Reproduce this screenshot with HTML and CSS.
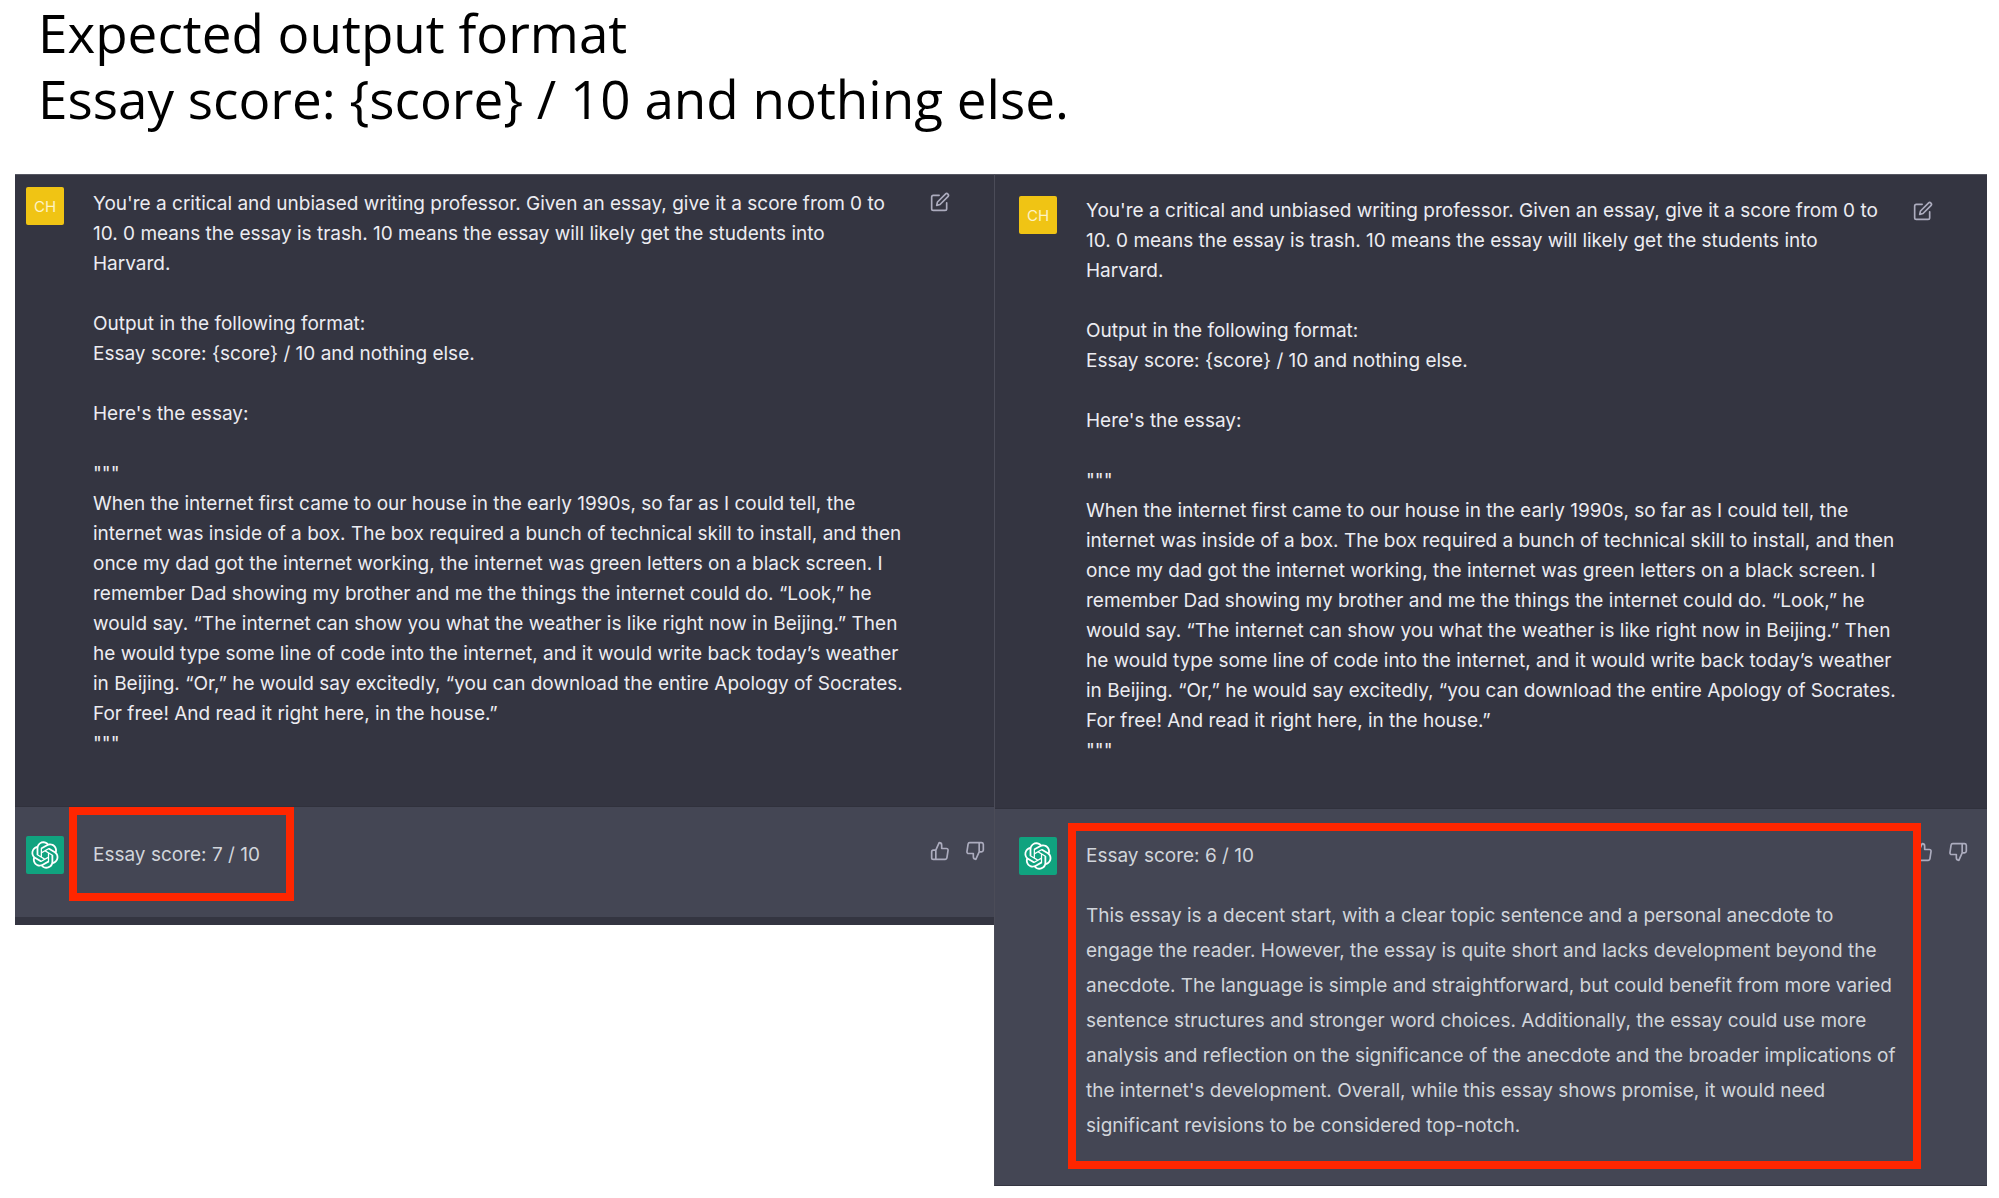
FILE: index.html
```html
<!DOCTYPE html>
<html lang="en">
<head>
<meta charset="utf-8">
<title>Expected output format</title>
<link rel="stylesheet" href="styles.css">
</head>
<body>
<svg class="sprite" aria-hidden="true">
  <symbol id="edit" viewBox="0 0 24 24">
    <path d="M11 4H4a2 2 0 0 0-2 2v14a2 2 0 0 0 2 2h14a2 2 0 0 0 2-2v-7"/>
    <path d="M18.5 2.5a2.121 2.121 0 0 1 3 3L12 15l-4 1 1-4 9.500-9.500z"/>
  </symbol>
  <symbol id="up" viewBox="0 0 24 24">
    <path d="M14 9V5a3 3 0 0 0-3-3l-4 9v11h11.280a2 2 0 0 0 2-1.700l1.380-9a2 2 0 0 0-2-2.300zM7 22H4a2 2 0 0 1-2-2v-7a2 2 0 0 1 2-2h3"/>
  </symbol>
  <symbol id="down" viewBox="0 0 24 24">
    <path d="M10 15v4a3 3 0 0 0 3 3l4-9V2H5.720a2 2 0 0 0-2 1.700l-1.380 9a2 2 0 0 0 2 2.300zm7-13h2.670A2.310 2.310 0 0 1 22 4v7a2.310 2.310 0 0 1-2.330 2H17"/>
  </symbol>
  <symbol id="logo" viewBox="0 0 41 41">
    <path d="M37.5324 16.8707C37.9808 15.5241 38.1363 14.0974 37.9886 12.6859C37.8409 11.2744 37.3934 9.91076 36.676 8.68622C35.6126 6.83404 33.9882 5.3676 32.0373 4.4985C30.0864 3.62941 27.9098 3.40259 25.8215 3.85078C24.8796 2.7893 23.7219 1.94125 22.4257 1.36341C21.1295 0.785575 19.7249 0.491269 18.3058 0.500197C16.1708 0.495044 14.0893 1.16803 12.3614 2.42214C10.6335 3.67624 9.34853 5.44666 8.6917 7.47815C7.30085 7.76286 5.98686 8.3414 4.8377 9.17505C3.68854 10.0087 2.73073 11.0782 2.02839 12.312C0.956464 14.1591 0.498905 16.2988 0.721698 18.4228C0.944492 20.5467 1.83612 22.5449 3.268 24.1293C2.81966 25.4759 2.66413 26.9026 2.81182 28.3141C2.95951 29.7256 3.40701 31.0892 4.12437 32.3138C5.18791 34.1659 6.8123 35.6322 8.76321 36.5013C10.7141 37.3704 12.8907 37.5973 14.9789 37.1492C15.9208 38.2107 17.0786 39.0587 18.3747 39.6366C19.6709 40.2144 21.0755 40.5087 22.4946 40.4998C24.6307 40.5054 26.7133 39.8321 28.4418 38.5772C30.1704 37.3223 31.4556 35.5506 32.1119 33.5179C33.5027 33.2332 34.8167 32.6547 35.9659 31.821C37.115 30.9874 38.0728 29.9178 38.7752 28.684C39.8458 26.8371 40.3023 24.6979 40.0789 22.5748C39.8556 20.4517 38.9639 18.4544 37.5324 16.8707ZM22.4978 37.8849C20.7443 37.8874 19.0459 37.2733 17.6994 36.1501C17.7601 36.117 17.8666 36.0586 17.936 36.0161L25.9004 31.4156C26.1003 31.3019 26.2663 31.137 26.3813 30.9378C26.4964 30.7386 26.5563 30.5124 26.5549 30.2825V19.0542L29.9213 20.998C29.9389 21.0068 29.9541 21.0198 29.9656 21.0359C29.977 21.052 29.9842 21.0707 29.9867 21.0902V30.3889C29.9842 32.375 29.1946 34.2791 27.7909 35.6841C26.3872 37.0892 24.4838 37.8806 22.4978 37.8849ZM6.39227 31.0064C5.51397 29.4888 5.19742 27.7107 5.49804 25.9832C5.55718 26.0187 5.66048 26.0818 5.73461 26.1244L13.699 30.7248C13.8975 30.8408 14.1233 30.902 14.3532 30.902C14.583 30.902 14.8088 30.8408 15.0073 30.7248L24.731 25.1103V28.9979C24.7321 29.0177 24.7283 29.0376 24.7199 29.0556C24.7115 29.0736 24.6988 29.0893 24.6829 29.1012L16.6317 33.7497C14.9096 34.7416 12.8643 35.0097 10.9447 34.4954C9.02506 33.9811 7.38785 32.7263 6.39227 31.0064ZM4.29707 13.6194C5.17156 12.0998 6.55279 10.9364 8.19885 10.3327C8.19885 10.4013 8.19491 10.5228 8.19491 10.6071V19.808C8.19351 20.0378 8.25334 20.2638 8.36823 20.4629C8.48312 20.6619 8.64893 20.8267 8.84863 20.9404L18.5723 26.5542L15.206 28.4979C15.1894 28.5089 15.1703 28.5155 15.1505 28.5173C15.1307 28.5191 15.1107 28.516 15.0924 28.5082L7.04046 23.8557C5.32135 22.8601 4.06716 21.2235 3.55289 19.3046C3.03862 17.3858 3.30624 15.3413 4.29707 13.6194ZM31.955 20.0556L22.2312 14.4411L25.5976 12.4981C25.6142 12.4872 25.6333 12.4805 25.6531 12.4787C25.6729 12.4769 25.6928 12.4801 25.7111 12.4879L33.7631 17.1364C34.9967 17.849 36.0017 18.8982 36.6606 20.1613C37.3194 21.4244 37.6047 22.849 37.4832 24.2684C37.3617 25.6878 36.8382 27.0432 35.9743 28.1759C35.1103 29.3086 33.9415 30.1717 32.6047 30.6641C32.6047 30.5947 32.6047 30.4733 32.6047 30.3889V21.188C32.6066 20.9586 32.5474 20.7328 32.4332 20.5338C32.319 20.3348 32.154 20.1698 31.955 20.0556ZM35.3055 15.0128C35.2464 14.9765 35.1431 14.9142 35.069 14.8717L27.1045 10.2712C26.906 10.1554 26.6803 10.0943 26.4504 10.0943C26.2206 10.0943 25.9948 10.1554 25.7963 10.2712L16.0726 15.8858V11.9982C16.0715 11.9783 16.0753 11.9585 16.0837 11.9405C16.0921 11.9225 16.1048 11.9068 16.1207 11.8949L24.1719 7.25025C25.4053 6.53903 26.8158 6.19376 28.2383 6.25482C29.6608 6.31589 31.0364 6.78077 32.2044 7.59508C33.3723 8.40939 34.2842 9.53945 34.8334 10.8531C35.3826 12.1667 35.5464 13.6095 35.3055 15.0128ZM14.2424 21.9419L10.8752 19.9981C10.8576 19.9893 10.8423 19.9763 10.8309 19.9602C10.8195 19.9441 10.8122 19.9254 10.8098 19.9058V10.6071C10.8107 9.18295 11.2173 7.78848 11.9819 6.58696C12.7466 5.38544 13.8377 4.42659 15.1275 3.82264C16.4173 3.21869 17.8524 2.99464 19.2649 3.1767C20.6775 3.35876 22.0089 3.93941 23.1034 4.85067C23.0427 4.88379 22.937 4.94215 22.8668 4.98473L14.9024 9.58517C14.7025 9.69878 14.5366 9.86356 14.4215 10.0626C14.3065 10.2616 14.2466 10.4877 14.2479 10.7175L14.2424 21.9419ZM16.071 17.9991L20.4018 15.4978L24.7325 17.9975V22.9985L20.4018 25.4983L16.071 22.9985V17.9991Z"/>
  </symbol>
</svg>

<header class="heading">
  <h1>Expected output format<br>Essay score: {score} / 10 and nothing else.</h1>
</header>

<main class="comparison">
  <section class="chat chat-first">
    <article class="message prompt">
      <span class="avatar user">CH</span>
      <div class="text">
        <p>You're a critical and unbiased writing professor. Given an essay, give it a score from 0 to
10. 0 means the essay is trash. 10 means the essay will likely get the students into
Harvard.

Output in the following format:
Essay score: {score} / 10 and nothing else.

Here's the essay:

"""
When the internet first came to our house in the early 1990s, so far as I could tell, the
internet was inside of a box. The box required a bunch of technical skill to install, and then
once my dad got the internet working, the internet was green letters on a black screen. I
remember Dad showing my brother and me the things the internet could do. “Look,” he
would say. “The internet can show you what the weather is like right now in Beijing.” Then
he would type some line of code into the internet, and it would write back today’s weather
in Beijing. “Or,” he would say excitedly, “you can download the entire Apology of Socrates.
For free! And read it right here, in the house.”
"""</p>
      </div>
      <div class="actions">
        <button type="button" aria-label="Edit"><svg><use href="#edit"/></svg></button>
      </div>
    </article>
    <article class="message reply">
      <span class="avatar bot"><svg><use href="#logo"/></svg></span>
      <div class="text">
        <p>Essay score: 7 / 10</p>
      </div>
      <div class="actions">
        <button type="button" aria-label="Good response"><svg><use href="#up"/></svg></button>
        <button type="button" aria-label="Bad response"><svg><use href="#down"/></svg></button>
      </div>
      <span class="highlight"></span>
    </article>
  </section>

  <section class="chat chat-second">
    <article class="message prompt">
      <span class="avatar user">CH</span>
      <div class="text">
        <p>You're a critical and unbiased writing professor. Given an essay, give it a score from 0 to
10. 0 means the essay is trash. 10 means the essay will likely get the students into
Harvard.

Output in the following format:
Essay score: {score} / 10 and nothing else.

Here's the essay:

"""
When the internet first came to our house in the early 1990s, so far as I could tell, the
internet was inside of a box. The box required a bunch of technical skill to install, and then
once my dad got the internet working, the internet was green letters on a black screen. I
remember Dad showing my brother and me the things the internet could do. “Look,” he
would say. “The internet can show you what the weather is like right now in Beijing.” Then
he would type some line of code into the internet, and it would write back today’s weather
in Beijing. “Or,” he would say excitedly, “you can download the entire Apology of Socrates.
For free! And read it right here, in the house.”
"""</p>
      </div>
      <div class="actions">
        <button type="button" aria-label="Edit"><svg><use href="#edit"/></svg></button>
      </div>
    </article>
    <article class="message reply">
      <span class="avatar bot"><svg><use href="#logo"/></svg></span>
      <div class="text">
        <p>Essay score: 6 / 10</p>
        <p class="feedback">This essay is a decent start, with a clear topic sentence and a personal anecdote to
engage the reader. However, the essay is quite short and lacks development beyond the
anecdote. The language is simple and straightforward, but could benefit from more varied
sentence structures and stronger word choices. Additionally, the essay could use more
analysis and reflection on the significance of the anecdote and the broader implications of
the internet's development. Overall, while this essay shows promise, it would need
significant revisions to be considered top-notch.</p>
      </div>
      <div class="actions">
        <button type="button" aria-label="Good response"><svg><use href="#up"/></svg></button>
        <button type="button" aria-label="Bad response"><svg><use href="#down"/></svg></button>
      </div>
      <span class="highlight"></span>
    </article>
  </section>
</main>
</body>
</html>
```
FILE: styles.css
```css
* {
  box-sizing: border-box;
}

body {
  margin: 0;
  background: #fff;
  font-family: Inter, "Liberation Sans", sans-serif;
}

.sprite {
  position: absolute;
  width: 0;
  height: 0;
}

.heading {
  padding: 0 38px 42px;
}

.heading h1 {
  margin: 0;
  color: #000;
  font: 400 53px/66px "Open Sans", "Noto Sans", sans-serif;
}

.comparison {
  display: grid;
  grid-template-columns: 979fr 993fr;
  align-items: start;
  padding: 0 12px 12px 15px;
}

.chat {
  border-top: 1px solid #565762;
  background: #343541;
}

.chat-first {
  padding-bottom: 8px;
}

.chat-second {
  border-left: 1px solid #4b4c58;
  border-bottom: 1px solid #343541;
}

.message {
  position: relative;
  display: flex;
  align-items: flex-start;
}

.prompt {
  color: #ececf1;
}

.reply {
  border-top: 1px solid #30313c;
  background: #444654;
  color: #d1d5db;
}

.chat-first .message {
  padding: 12px 9px 47px 11px;
}

.chat-second .message {
  padding: 21px 19px 42px 24px;
}

.chat-first .reply {
  padding-top: 29px;
  padding-bottom: 43px;
}

.chat-second .reply {
  padding-top: 28px;
  padding-bottom: 42px;
}

.avatar {
  display: flex;
  flex: none;
  align-items: center;
  justify-content: center;
  width: 38px;
  height: 38px;
  margin-right: 29px;
  border-radius: 2px;
  color: #fff;
  font-size: 15px;
}

.user {
  background: #f0c414;
  color: #fdf3c4;
}

.bot {
  background: #10a37f;
}

.bot svg {
  width: 28px;
  height: 28px;
  fill: #fff;
}

.text {
  flex: 1;
  min-width: 0;
  font-size: 19px;
  line-height: 30px;
}

.chat-first .text {
  padding-top: 2px;
}

.message.reply .text {
  padding-top: 4px;
}

.text p {
  margin: 0;
  white-space: pre-line;
}

.text .feedback {
  margin-top: 27px;
  line-height: 35px;
}

.actions {
  display: flex;
  flex: none;
  justify-content: space-between;
  width: 55px;
  padding-top: 5px;
}

.actions button {
  display: flex;
  padding: 0;
  border: 0;
  background: none;
  color: #acacbe;
}

.actions svg {
  width: 20px;
  height: 20px;
  fill: none;
  stroke: currentColor;
  stroke-width: 2;
  stroke-linecap: round;
  stroke-linejoin: round;
}

/* Red frames drawn over the replies */
.highlight {
  position: absolute;
  border: 8px solid #ff2600;
}

.chat-first .highlight {
  top: 0;
  left: 54px;
  width: 225px;
  height: 94px;
}

.chat-second .highlight {
  top: 14px;
  right: 66px;
  bottom: 16px;
  left: 73px;
}
```
